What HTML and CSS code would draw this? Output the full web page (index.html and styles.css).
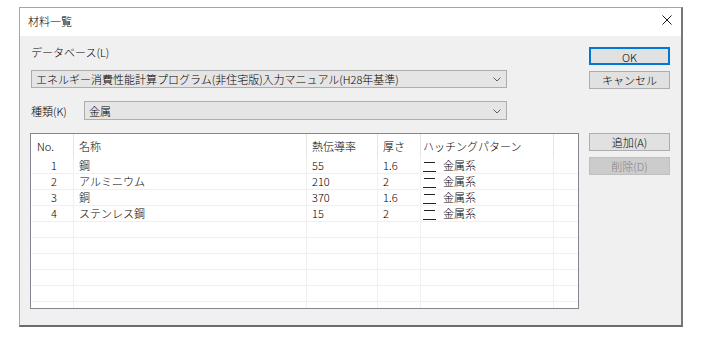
FILE: index.html
```html
<!DOCTYPE html>
<html lang="ja">
<head>
  <meta charset="UTF-8" />
  <title>材料一覧</title>
  <link rel="stylesheet" href="styles.css">
</head>
<body>
  <div class="dialog">
    <div class="titlebar">
      <span class="title">材料一覧</span>
      <svg class="close" width="10" height="10" viewBox="0 0 10 10">
        <path d="M0.5 0.5 L9.5 9.5 M9.5 0.5 L0.5 9.5" stroke="#1a1a1a" stroke-width="1" fill="none"/>
      </svg>
    </div>

    <div class="content">
      <div class="main">
        <div class="label">データベース(L)</div>
        <div class="combo combo-db">
          <span>エネルギー消費性能計算プログラム(非住宅版)入力マニュアル(H28年基準)</span>
          <svg class="arrow" width="8" height="5" viewBox="0 0 8 5"><path d="M0.5 0.5 L4 4 L7.5 0.5" stroke="#606060" fill="none"/></svg>
        </div>

        <div class="kind-row">
          <span class="label kind-label">種類(K)</span>
          <div class="combo combo-kind">
            <span>金属</span>
            <svg class="arrow" width="8" height="5" viewBox="0 0 8 5"><path d="M0.5 0.5 L4 4 L7.5 0.5" stroke="#606060" fill="none"/></svg>
          </div>
        </div>

        <div class="listbox">
          <div class="row head">
            <div class="cell c-no">No.</div>
            <div class="cell c-name">名称</div>
            <div class="cell c-k">熱伝導率</div>
            <div class="cell c-t">厚さ</div>
            <div class="cell c-h">ハッチングパターン</div>
            <div class="cell"></div>
          </div>
          <div id="rows"></div>
        </div>
      </div>

      <div class="side">
        <button class="btn btn-default">OK</button>
        <button class="btn">キャンセル</button>
        <button class="btn btn-add">追加(A)</button>
        <button class="btn" disabled>削除(D)</button>
      </div>
    </div>
  </div>

  <script>
    const materials = [
      [1, "鋼", "55", "1.6"],
      [2, "アルミニウム", "210", "2"],
      [3, "銅", "370", "1.6"],
      [4, "ステンレス鋼", "15", "2"]
    ];
    const hatch = '<svg class="hatch" width="13" height="12" viewBox="0 0 13 12">' +
      '<path d="M1 2.5 H12 M0 11.5 H13" stroke="#222" stroke-width="1"/></svg>';

    let html = "";
    for (let i = 0; i < 10; i++) {
      const m = materials[i];
      if (m) {
        html += `<div class="row">
          <div class="cell c-no num">${m[0]}</div>
          <div class="cell c-name">${m[1]}</div>
          <div class="cell c-k">${m[2]}</div>
          <div class="cell c-t">${m[3]}</div>
          <div class="cell c-h">${hatch}<span>金属系</span></div>
          <div class="cell"></div>
        </div>`;
      } else {
        html += `<div class="row"><div class="cell"></div><div class="cell"></div><div class="cell"></div><div class="cell"></div><div class="cell"></div><div class="cell"></div></div>`;
      }
    }
    document.getElementById("rows").innerHTML = html;
  </script>
</body>
</html>
```

FILE: styles.css
```css
body {
  margin: 0;
  padding: 7px 0 0 19px;
  background: #ffffff;
  font-family: "Noto Sans CJK JP", "Noto Sans", sans-serif;
  font-size: 11px;
  font-weight: 300;
  color: #000;
}

.dialog {
  width: 661px;
  border: 1px solid #a6a6a6;
  border-right: 2px solid #777;
  border-bottom: 2px solid #6b6b6b;
  background: #f0f0f0;
}

.titlebar {
  height: 28px;
  background: #ffffff;
  display: flex;
  align-items: center;
  padding: 0 0 0 8px;
}

.title {
  line-height: 16px;
  margin-top: -3px;
}

.close {
  margin-left: auto;
  margin-right: 9px;
  margin-top: -4px;
}

.content {
  display: flex;
  height: 289px;
  padding-left: 11px;
}

.main {
  width: 548px;
  padding-top: 8px;
}

.label {
  line-height: 16px;
  height: 16px;
}

.combo {
  box-sizing: border-box;
  display: flex;
  align-items: center;
  background: #e5e5e5;
  border: 1px solid #adadad;
  padding: 0 5px 0 4px;
  line-height: 16px;
}

.combo .arrow {
  margin-left: auto;
  margin-top: 1px;
}

.combo-db {
  margin-top: 10px;
  width: 476px;
  height: 18px;
}

.kind-row {
  display: flex;
  align-items: center;
  margin-top: 13px;
}

.kind-label {
  width: 53px;
}

.combo-kind {
  width: 423px;
  height: 19px;
}

.listbox {
  box-sizing: border-box;
  margin: 13px 0 0 -1px;
  width: 549px;
  height: 176px;
  border: 1px solid #828790;
  background: #ffffff;
  overflow: hidden;
}

.row {
  display: grid;
  grid-template-columns: 43px 233px 71px 43px 133px 24px;
  height: 16px;
  box-sizing: border-box;
  border-bottom: 1px solid #f0f0f0;
}

.row.head {
  height: 24px;
  border-bottom: none;
}

.cell {
  box-sizing: border-box;
  border-right: 1px solid #f0f0f0;
  line-height: 15px;
  white-space: nowrap;
  display: flex;
  align-items: center;
}

.cell:last-child {
  border-right: none;
}

.head .cell {
  border-right-color: #e5e5e5;
  line-height: 22px;
  align-items: flex-start;
  padding-top: 1px;
}

.c-no { padding-left: 6px; }
.c-name { padding-left: 5px; }
.c-k { padding-left: 5px; }
.c-t { padding-left: 5px; }
.c-h { padding-left: 2px; }

.cell.num {
  justify-content: flex-end;
  padding: 0 16px 0 0;
}

.hatch {
  margin-right: 7px;
}

.side {
  margin-left: 10px;
  padding-top: 11px;
  display: flex;
  flex-direction: column;
}

.btn {
  box-sizing: border-box;
  width: 81px;
  height: 18px;
  margin: 0 0 6px;
  padding: 0;
  background: #e1e1e1;
  border: 1px solid #adadad;
  font-family: inherit;
  font-size: 11px;
  font-weight: 300;
  line-height: 16px;
  color: #000;
}

.btn-default {
  border: 2px solid #0078d7;
}

.btn-add {
  margin-top: 38px;
}

.btn:disabled {
  background: #cccccc;
  border-color: #bfbfbf;
  color: #838383;
}
```
